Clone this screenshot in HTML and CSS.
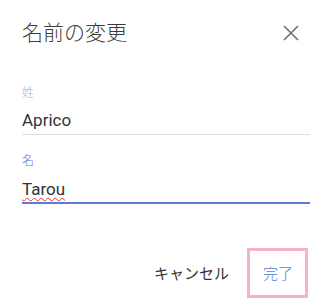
FILE: index.html
```html
<!DOCTYPE html>
<html lang="ja">
<head>
<meta charset="utf-8">
<link rel="stylesheet" href="styles.css">
</head>
<body>
<div class="dialog">
  <div class="header">
    <div class="title">名前の変更</div>
    <svg class="close" width="16" height="16" viewBox="0 0 16 16" aria-label="閉じる">
      <path d="M1 1 L15 15 M15 1 L1 15" stroke="#707070" stroke-width="1.6" fill="none"/>
    </svg>
  </div>
  <div class="field first">
    <div class="label">姓</div>
    <div class="value">Aprico</div>
  </div>
  <div class="field focused">
    <div class="label">名</div>
    <div class="value"><span class="misspelled">Tarou</span></div>
  </div>
  <div class="actions">
    <div class="btn cancel">キャンセル</div>
    <div class="btn done">完了</div>
  </div>
</div>
</body>
</html>
```
FILE: styles.css
```css
html, body {
  margin: 0;
  padding: 0;
  background: #ffffff;
}
body {
  font-family: Roboto, "Noto Sans CJK JP", sans-serif;
}
.dialog {
  width: 331px;
  height: 306px;
  box-sizing: border-box;
  padding: 21px 21px 0 22px;
  display: flex;
  flex-direction: column;
}
.header {
  display: flex;
  justify-content: space-between;
  align-items: center;
  height: 21px;
  padding-right: 11px;
}
.title {
  font-family: "Noto Sans CJK JP", sans-serif;
  font-size: 21px;
  line-height: 21px;
  color: #3c3c3c;
  font-weight: 300;
}
.close {
  display: block;
  margin-top: 2px;
}
.field {
  display: flex;
  flex-direction: column;
}
.field.first {
  margin-top: 44px;
}
.field.focused {
  margin-top: 19px;
}
.label {
  font-family: "Noto Sans CJK JP", sans-serif;
  font-size: 12px;
  line-height: 12px;
  color: #b0b0b0;
  font-weight: 300;
}
.value {
  font-family: Roboto, sans-serif;
  font-size: 17px;
  line-height: 20px;
  color: #333333;
  margin-top: 12px;
  padding-bottom: 4px;
  border-bottom: 1px solid #dddddd;
}
.focused .label {
  color: #5b7bd6;
}
.focused .value {
  margin-top: 13px;
  padding-bottom: 3px;
  border-bottom: 2px solid #5b7bd6;
}
.misspelled {
  text-decoration: underline wavy #e0303a;
  text-decoration-thickness: 1px;
  text-underline-offset: 2px;
}
.actions {
  margin-top: 44px;
  display: flex;
  justify-content: flex-end;
  align-items: center;
  padding-right: 2px;
}
.btn {
  font-family: "Noto Sans CJK JP", sans-serif;
  font-size: 15px;
  line-height: 44px;
}
.cancel {
  color: #333333;
  margin-right: 18px;
  font-weight: 400;
}
.done {
  color: #5b7bd6;
  border: 3px solid #f5b2ca;
  padding: 0 12px 0 13px;
  font-weight: 300;
}
```
